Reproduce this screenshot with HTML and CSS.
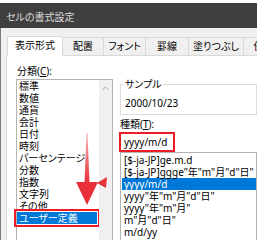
FILE: index.html
```html
<!DOCTYPE html>
<html lang="ja">
<head>
    <meta charset="UTF-8">
    <title>セルの書式設定</title>
    <link rel="stylesheet" href="styles.css">
</head>
<body>
    <div class="dialog">
        <div class="titlebar">セルの書式設定</div>
        <div class="body">
            <div class="tabs">
                <div class="tab active">表示形式</div>
                <div class="tab">配置</div>
                <div class="tab">フォント</div>
                <div class="tab">罫線</div>
                <div class="tab">塗りつぶし</div>
                <div class="tab">保護</div>
            </div>
            <div class="panel">
                <div class="category">
                    <div class="label">分類(<u>C</u>):</div>
                    <div class="listbox">
                        <ul class="items">
                            <li>標準</li>
                            <li>数値</li>
                            <li>通貨</li>
                            <li>会計</li>
                            <li>日付</li>
                            <li>時刻</li>
                            <li>パーセンテージ</li>
                            <li>分数</li>
                            <li>指数</li>
                            <li>文字列</li>
                            <li>その他</li>
                            <li class="selected marked">ユーザー定義</li>
                        </ul>
                        <div class="scrollbar">
                            <svg width="7" height="5" viewBox="0 0 7 5"><polyline points="0.5,4 3.5,1 6.5,4" fill="none" stroke="#a6a6a6" stroke-width="1"/></svg>
                        </div>
                    </div>
                </div>
                <div class="detail">
                    <fieldset class="sample">
                        <legend>サンプル</legend>
                        <div>2000/10/23</div>
                    </fieldset>
                    <div class="label">種類(<u>T</u>):</div>
                    <div class="format-input">yyyy/m/d</div>
                    <ul class="format-list">
                        <li>[$-ja-JP]ge.m.d</li>
                        <li>[$-ja-JP]ggge"年"m"月"d"日"</li>
                        <li class="selected">yyyy/m/d</li>
                        <li>yyyy"年"m"月"d"日"</li>
                        <li>yyyy"年"m"月"</li>
                        <li>m"月"d"日"</li>
                        <li>m/d/yy</li>
                    </ul>
                </div>
            </div>
        </div>

        <!-- 注釈の赤い矢印 -->
        <svg class="arrow" width="257" height="240" viewBox="0 0 257 240">
            <defs>
                <linearGradient id="shaft" x1="0" y1="0" x2="0" y2="1">
                    <stop offset="0" stop-color="#f5b5b5"/>
                    <stop offset="1" stop-color="#e8303a"/>
                </linearGradient>
            </defs>
            <polygon points="86.5,133 87.5,133 89.5,183 84.5,183" fill="url(#shaft)"/>
            <polygon points="76,182 98,182 87,205" fill="#e8303a"/>
            <polygon points="97,183 107,177 106,188" fill="#e8303a"/>
        </svg>
    </div>
</body>
</html>
```

FILE: styles.css
```css
body {
    margin: 0;
    background: #fff;
    font-family: "Noto Sans", "Noto Sans CJK JP", sans-serif;
    font-size: 10px;
    font-feature-settings: "palt";
    line-height: 12px;
    color: #000;
}
.dialog {
    position: relative;
    width: 257px;
    height: 240px;
    padding-top: 3px;
    box-sizing: border-box;
    overflow: hidden;
}
.titlebar {
    height: 25px;
    box-sizing: border-box;
    padding: 8px 0 0 6px;
    background: #3f3f3f;
    color: #dedede;
}
.body {
    height: 220px;
    background: #f0f0f0;
    padding: 9px 0 0 5px;
    border-left: 1px solid #7a7a7a;
    box-sizing: border-box;
}
.tabs {
    display: flex;
    height: 18px;
    padding-left: 1px;
}
.tab {
    height: 18px;
    box-sizing: border-box;
    line-height: 17px;
    text-align: center;
    border: 1px solid #d9d9d9;
    border-left: none;
    border-bottom: none;
    flex: none;
}
.tab:nth-child(2) { width: 41px; }
.tab:nth-child(3) { width: 42px; }
.tab:nth-child(4) { width: 43px; }
.tab:nth-child(5) { width: 55px; }
.tab:nth-child(6) { width: 40px; }
.tab.active {
    width: 56px;
    height: 20px;
    margin-top: -1px;
    background: #fff;
    border-left: 1px solid #d9d9d9;
    position: relative;
    z-index: 1;
}
.panel {
    display: flex;
    gap: 7px;
    height: 200px;
    background: #fff;
    border: 1px solid #d9d9d9;
    border-right: none;
    padding: 9px 0 0 9px;
}
.label {
    padding-left: 1px;
}
u {
    text-decoration-thickness: 1px;
    text-underline-offset: 1px;
}
.category {
    width: 97px;
    flex: none;
}
.listbox {
    display: flex;
    margin-top: 2px;
    height: 170px;
    border: 1px solid #b4b4b4;
}
ul {
    list-style: none;
    margin: 0;
    padding: 0;
}
.items {
    flex: 1;
}
.items li {
    height: 12px;
    padding-left: 2px;
    white-space: nowrap;
}
.selected {
    background: #0078d7;
    color: #fff;
}
.items .marked {
    margin-right: 2px;
    outline: 2px solid #ee1c25;
    outline-offset: 1px;
}
.scrollbar {
    width: 13px;
    background: #f0f0f0;
    display: flex;
    justify-content: center;
    padding-top: 6px;
    box-sizing: border-box;
}
.detail {
    width: 137px;
    flex: none;
}
.sample {
    margin: 13px 0 0;
    padding: 7px 4px 5px;
    border: 1px solid #dcdcdc;
    min-inline-size: 0;
}
.sample legend {
    padding: 0 1px;
    margin-left: -1px;
}
.detail .label {
    margin-top: 3px;
    padding-left: 0;
}
.format-input {
    width: 56px;
    height: 20px;
    box-sizing: border-box;
    margin-top: 2px;
    padding-left: 3px;
    line-height: 16px;
    border: 2px solid #ee1c25;
    margin-left: -1px;
}
.format-list {
    height: 100px;
    border: 1px solid #b4b4b4;
    padding-top: 1px;
}
.format-list li {
    height: 12px;
    margin-left: 1px;
    padding-left: 2px;
    white-space: nowrap;
}
.arrow {
    position: absolute;
    top: 0;
    left: 0;
    pointer-events: none;
}
```
